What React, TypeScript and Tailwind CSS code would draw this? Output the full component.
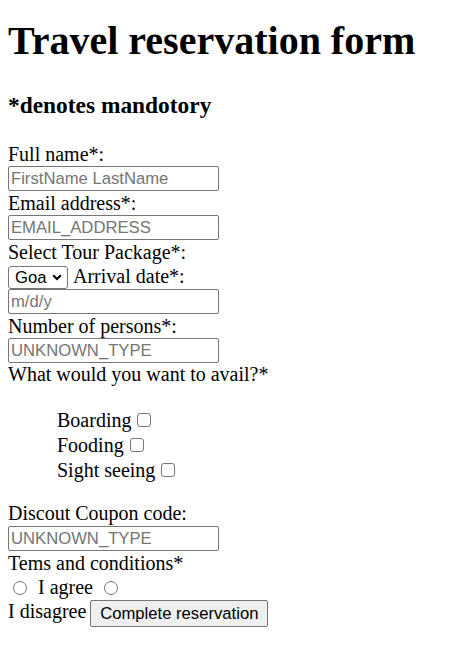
export default function App() {
  const inputCls =
    "block w-[211px] h-[25px] border border-[#767676] rounded-[2px] px-[2px] bg-white text-black text-[16.67px] font-['Liberation_Sans',Arial,sans-serif] placeholder:text-[#757575] outline-none";
  const label = "h-[23px] leading-[23px] whitespace-nowrap";
  return (
    <div className="min-h-[661px] bg-white text-black pl-[8px] font-['Liberation_Serif','Times_New_Roman',serif] text-[20px]">
      <h1 className="mt-[18px] h-[46px] leading-[46px] text-[40px] font-bold whitespace-nowrap">
        Travel reservation form
      </h1>
      <h3 className="mt-[28px] h-[27px] leading-[27px] text-[23.4px] font-bold whitespace-nowrap">
        *denotes mandotory
      </h3>
      <form onSubmit={(e) => e.preventDefault()}>
        <div className={`mt-[24px] ${label}`}>Full name*:</div>
        <input className={inputCls} placeholder="FirstName LastName" />
        <div className={`mt-[1px] ${label}`}>Email address*:</div>
        <input className={inputCls} placeholder="EMAIL_ADDRESS" />
        <div className={`mt-[1px] ${label}`}>Select Tour Package*:</div>
        <div className="mt-[2px] h-[23px] flex items-start">
          <div className="h-[23px] w-[60px] shrink-0 border border-[#767676] rounded-[3px] bg-white flex items-center font-['Liberation_Sans',Arial,sans-serif] text-[16.67px]">
            <span className="ml-[6px] leading-[19px]">Goa</span>
            <svg className="ml-[6px]" width="10" height="7" viewBox="0 0 10 7">
              <polyline points="1.2,1.3 5,5 8.8,1.3" fill="none" stroke="#000" strokeWidth="2" />
            </svg>
          </div>
          <span className="ml-[5px] leading-[21px] whitespace-nowrap">Arrival date*:</span>
        </div>
        <input className={inputCls} placeholder="m/d/y" />
        <div className={`mt-[1px] ${label}`}>Number of persons*:</div>
        <input className={inputCls} placeholder="UNKNOWN_TYPE" />
        <div className={label}>What would you want to avail?*</div>
        <div className="mt-[22px] pl-[49px]">
          {["Boarding", "Fooding", "Sight seeing"].map((t) => (
            <div key={t} className="h-[25px] flex items-start">
              <span className="leading-[25px] whitespace-nowrap">{t}</span>
              <span className="block shrink-0 ml-[6px] mt-[4.5px] w-[14px] h-[14px] border border-[#767676] rounded-[3px] bg-white" />
            </div>
          ))}
        </div>
        <div className={`mt-[19px] ${label}`}>Discout Coupon code:</div>
        <input className={`mt-[1px] ${inputCls}`} placeholder="UNKNOWN_TYPE" />
        <div className={`mt-[1px] ${label}`}>Tems and conditions*</div>
        <div className="h-[25px] flex items-start">
          <span className="block shrink-0 ml-[5px] mt-[6px] w-[14px] h-[14px] border border-[#767676] rounded-full bg-white" />
          <span className="ml-[11px] leading-[25px] whitespace-nowrap">I agree</span>
          <span className="block shrink-0 ml-[11px] mt-[6px] w-[14px] h-[14px] border border-[#767676] rounded-full bg-white" />
        </div>
        <div className="flex items-start">
          <span className="leading-[23px] whitespace-nowrap">I disagree</span>
          <button
            type="submit"
            className="ml-[4px] h-[27px] w-[178px] border border-[#767676] rounded-[2px] bg-[#efefef] text-black text-[16.67px] leading-[19px] font-['Liberation_Sans',Arial,sans-serif] whitespace-nowrap"
          >
            Complete reservation
          </button>
        </div>
      </form>
    </div>
  );
}
